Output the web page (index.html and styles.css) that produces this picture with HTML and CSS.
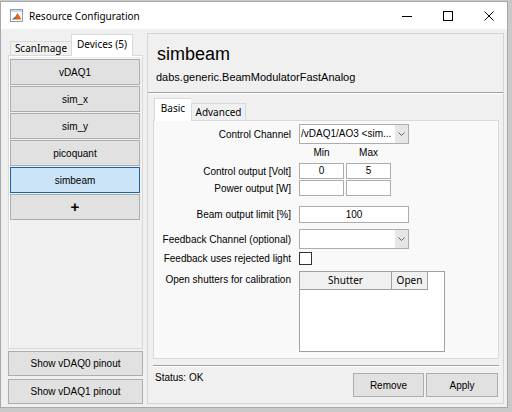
FILE: index.html
```html
<!DOCTYPE html>
<html lang="en">
<head>
    <meta charset="UTF-8">
    <title>Resource Configuration</title>
    <link rel="stylesheet" href="styles.css">
</head>
<body>
    <div class="window">
        <div class="titlebar">
            <svg class="app-icon" width="13" height="13" viewBox="0 0 13 13">
                <rect x="0.5" y="0.5" width="12" height="12" fill="#fff" stroke="#8d9cb0"/>
                <rect x="1" y="1" width="11" height="2" fill="#c9d8ea"/>
                <path d="M2 10.5 L5 8 L7.5 4 L9.5 7 L11.5 10.5 Z" fill="#e2651c"/>
                <path d="M2 10.5 L5 8 L6.5 9.5 Z" fill="#3b6db0"/>
            </svg>
            <span class="title">Resource Configuration</span>
            <div class="win-controls">
                <span class="ctl"><svg width="10" height="10" viewBox="0 0 10 10"><path d="M0 5.5 H10" stroke="#000" stroke-width="1"/></svg></span>
                <span class="ctl"><svg width="10" height="10" viewBox="0 0 10 10"><rect x="0.5" y="0.5" width="9" height="9" fill="none" stroke="#000"/></svg></span>
                <span class="ctl close"><svg width="10" height="10" viewBox="0 0 10 10"><path d="M0.5 0.5 L9.5 9.5 M9.5 0.5 L0.5 9.5" stroke="#000" stroke-width="1"/></svg></span>
            </div>
        </div>

        <div class="main">
            <div class="left">
                <div class="tabs">
                    <div class="tab scan">ScanImage</div>
                    <div class="tab active devtab">Devices (5)</div>
                </div>
                <div class="tab-panel devices">
                    <button class="dev">vDAQ1</button>
                    <button class="dev">sim_x</button>
                    <button class="dev">sim_y</button>
                    <button class="dev">picoquant</button>
                    <button class="dev selected">simbeam</button>
                    <button class="dev add">+</button>
                </div>
                <button class="pinout first">Show vDAQ0 pinout</button>
                <button class="pinout">Show vDAQ1 pinout</button>
            </div>

            <div class="right">
                <h1>simbeam</h1>
                <div class="classname">dabs.generic.BeamModulatorFastAnalog</div>
                <div class="sep head-sep"></div>

                <div class="sub-tabs">
                    <div class="tab active basic">Basic</div>
                    <div class="tab advanced">Advanced</div>
                </div>
                <div class="sub-panel">
                    <div class="row r1">
                        <label>Control Channel</label>
                        <div class="select wide">
                            <span class="value">/vDAQ1/AO3 &lt;sim...</span>
                            <span class="arrow"><svg width="7" height="4" viewBox="0 0 7 4"><path d="M0.5 0.5 L3.5 3.5 L6.5 0.5" fill="none" stroke="#606060"/></svg></span>
                        </div>
                    </div>
                    <div class="row r2">
                        <label></label>
                        <span class="minmax">Min</span>
                        <span class="minmax">Max</span>
                    </div>
                    <div class="row r3">
                        <label>Control output [Volt]</label>
                        <div class="box half">0</div>
                        <div class="box half">5</div>
                    </div>
                    <div class="row r4">
                        <label>Power output [W]</label>
                        <div class="box half"></div>
                        <div class="box half"></div>
                    </div>
                    <div class="row r5">
                        <label>Beam output limit [%]</label>
                        <div class="box wide">100</div>
                    </div>
                    <div class="row r6">
                        <label>Feedback Channel (optional)</label>
                        <div class="select wide">
                            <span class="value"></span>
                            <span class="arrow"><svg width="7" height="4" viewBox="0 0 7 4"><path d="M0.5 0.5 L3.5 3.5 L6.5 0.5" fill="none" stroke="#606060"/></svg></span>
                        </div>
                    </div>
                    <div class="row r7">
                        <label>Feedback uses rejected light</label>
                        <span class="check"></span>
                    </div>
                    <div class="row r8">
                        <label>Open shutters for calibration</label>
                        <div class="shutters">
                            <div class="thead">
                                <span class="th shutter">Shutter</span>
                                <span class="th open">Open</span>
                            </div>
                        </div>
                    </div>
                </div>

                <div class="sep foot-sep"></div>
                <div class="footer">
                    <span class="status">Status: OK</span>
                    <button class="act remove">Remove</button>
                    <button class="act apply">Apply</button>
                </div>
            </div>
        </div>
    </div>
</body>
</html>
```

FILE: styles.css
```css
* {
    box-sizing: border-box;
}
html, body {
    margin: 0;
}
body {
    background: #c9c9c9;
    font-family: "Liberation Sans", Arial, sans-serif;
    font-size: 10px;
    color: #000;
    width: 512px;
    height: 412px;
    overflow: hidden;
}
button {
    font-family: "Liberation Sans", Arial, sans-serif;
    font-size: 10px;
    color: #000;
    background: #e1e1e1;
    border: 1px solid #adadad;
    padding: 0;
    margin: 0;
}
.window {
    margin-top: 1px;
    width: 508px;
    height: 407px;
    border: 1px solid #a8a8a8;
    background: #f0f0f0;
    display: flex;
    flex-direction: column;
}

/* title bar */
.titlebar {
    height: 27px;
    flex-shrink: 0;
    background: #fff;
    display: flex;
    align-items: center;
    padding-left: 9px;
}
.app-icon {
    display: block;
}
.title {
    margin-left: 6px;
    font-family: "Noto Sans", sans-serif;
    font-size: 10px;
    color: #000;
}
.win-controls {
    margin-left: auto;
    display: flex;
    height: 100%;
}
.ctl {
    width: 41px;
    display: flex;
    align-items: center;
    justify-content: center;
}
.ctl svg {
    display: block;
}
.ctl.close {
    width: 39px;
    padding-left: 3px;
}

/* body */
.main {
    flex: 1;
    display: flex;
    gap: 4px;
    padding: 4px 3px 3px 7px;
}
.left {
    width: 135px;
    margin-top: 1px;
    display: flex;
    flex-direction: column;
}
.tabs {
    height: 21px;
    display: flex;
    align-items: flex-end;
    padding-left: 2px;
    position: relative;
    z-index: 1;
}
.tab {
    font-family: "Noto Sans", sans-serif;
    font-size: 10px;
    border: 1px solid #d9d9d9;
    border-bottom: none;
    background: #f0f0f0;
    text-align: center;
}
.tab.active {
    background: #fff;
    margin-bottom: -1px;
}
.tab.scan {
    width: 61px;
    height: 14px;
    line-height: 13px;
    border-right: none;
}
.tab.devtab {
    width: 62px;
    height: 22px;
    line-height: 19px;
}
.tab-panel {
    flex: 1;
    border: 1px solid #d9d9d9;
    box-shadow: inset 1px 1px 0 #fff;
    background: #f0f0f0;
    padding: 3px 0 0 1px;
    display: flex;
    flex-direction: column;
    gap: 1px;
}
.dev {
    width: 130px;
    height: 26px;
}
.dev.selected {
    background: #cce4f7;
    border-color: #1c62aa;
}
.dev.add {
    font-size: 15px;
    font-weight: bold;
    line-height: 20px;
}
.pinout {
    width: 135px;
    height: 25px;
    margin-top: 3px;
}
.pinout.first {
    margin-top: 2px;
}

/* right side */
.right {
    flex: 1;
    border: 1px solid #d4d4d4;
    display: flex;
    flex-direction: column;
}
.right h1 {
    margin: 10px 0 0 9px;
    font-size: 18px;
    font-weight: normal;
    line-height: 20px;
}
.classname {
    margin: 7px 0 0 8px;
    font-size: 11px;
    line-height: 13px;
}
.sep {
    height: 2px;
    border-top: 1px solid #a0a0a0;
    border-bottom: 1px solid #fff;
}
.head-sep {
    margin-top: 8px;
}
.sub-tabs {
    margin-top: 4px;
    height: 22px;
    display: flex;
    align-items: flex-end;
    padding-left: 6px;
    position: relative;
    z-index: 1;
}
.tab.basic {
    width: 37px;
    height: 23px;
    line-height: 19px;
    border-right: none;
}
.tab.advanced {
    width: 55px;
    height: 17px;
    line-height: 16px;
}
.sub-panel {
    flex: 1;
    margin: 0 4px 0 5px;
    border: 1px solid #d9d9d9;
    background: #f9f9f9;
    padding-top: 3px;
}
.row {
    display: flex;
    align-items: center;
}
.row label {
    width: 137px;
    flex-shrink: 0;
    text-align: right;
    margin-right: 8px;
    white-space: nowrap;
}
.r1 { height: 20px; }
.r2 { height: 12px; margin-top: 2px; }
.r3 { height: 16px; margin-top: 5px; }
.r4 { height: 16px; margin-top: 1px; }
.r5 { height: 17px; margin-top: 10px; }
.r6 { height: 20px; margin-top: 6px; }
.r7 { height: 13px; margin-top: 3px; }
.r8 {
    margin-top: 6px;
    align-items: flex-start;
}
.r8 label {
    line-height: 18px;
}
.minmax {
    width: 45px;
    margin-right: 2px;
    text-align: center;
}
.box {
    height: 100%;
    background: #fff;
    border: 1px solid #adadad;
    text-align: center;
    line-height: 14px;
}
.box.half {
    width: 45px;
    margin-right: 2px;
}
.box.wide,
.select.wide {
    width: 110px;
}
.r5 .box {
    line-height: 15px;
}
.select {
    height: 100%;
    display: flex;
    background: #fff;
    border: 1px solid #adadad;
}
.select .value {
    flex: 1;
    padding-left: 1px;
    line-height: 18px;
    white-space: nowrap;
    overflow: hidden;
}
.select .arrow {
    width: 13px;
    background: #e6e6e6;
    display: flex;
    align-items: center;
    justify-content: center;
}
.select .arrow svg {
    display: block;
}
.check {
    width: 13px;
    height: 13px;
    background: #fff;
    border: 1px solid #333;
}
.shutters {
    width: 146px;
    height: 81px;
    background: #fff;
    border: 1px solid #a0a0a0;
}
.thead {
    display: flex;
    height: 18px;
}
.th {
    font-family: "Noto Sans", sans-serif;
    font-size: 10px;
    line-height: 17px;
    text-align: center;
    background: #f0f0f0;
    border-right: 1px solid #a0a0a0;
    border-bottom: 1px solid #a0a0a0;
}
.th.shutter {
    width: 92px;
}
.th.open {
    width: 36px;
}
.foot-sep {
    margin: 6px 4px 0 5px;
}
.footer {
    height: 36px;
    display: flex;
    align-items: flex-start;
    padding: 6px 5px 0 7px;
}
.status {
    line-height: 12px;
    margin-top: -1px;
}
.act {
    height: 24px;
}
.remove {
    width: 71px;
    margin-left: auto;
}
.apply {
    width: 72px;
    margin-left: 2px;
}
```
